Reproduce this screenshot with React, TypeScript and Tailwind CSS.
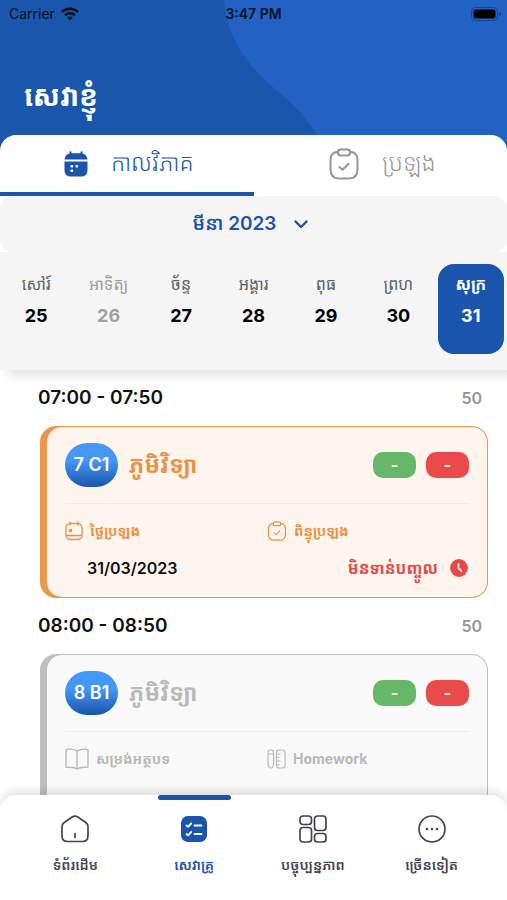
import React, { useState } from 'react';
import clsx from 'clsx';

const DAYS = [
  { name: 'សៅរ៍', date: 25 },
  { name: 'អាទិត្យ', date: 26, off: true },
  { name: 'ច័ន្ទ', date: 27 },
  { name: 'អង្គារ', date: 28 },
  { name: 'ពុធ', date: 29 },
  { name: 'ព្រហ', date: 30 },
  { name: 'សុក្រ', date: 31 },
];

/* ---------- icons ---------- */

function WifiIcon() {
  return (
    <svg width="18" height="14" viewBox="0 0 18 14" fill="none" stroke="#06101f" strokeWidth="2.4">
      <path d="M1 5a11.5 11.5 0 0 1 16 0" />
      <path d="M4 8.2a7.2 7.2 0 0 1 10 0" />
      <path d="M9 13.6 6.2 10.8a4 4 0 0 1 5.6 0z" fill="#06101f" stroke="none" />
    </svg>
  );
}

function BatteryIcon() {
  return (
    <svg width="31" height="14" viewBox="0 0 31 14">
      <rect x="0.5" y="0.5" width="26" height="13" rx="4" fill="none" stroke="#164690" />
      <rect x="2.5" y="2.5" width="22" height="9" rx="2.5" fill="#000" />
      <path d="M28 5v4c1.3-.4 2-1.1 2-2s-.7-1.6-2-2z" fill="#164690" />
    </svg>
  );
}

function CalendarSolidIcon() {
  return (
    <svg width="24" height="26" viewBox="0 0 24 26" fill="#1a54ac">
      <path d="M.5 8.5C.8 5 2.5 3 5.5 2.5V1.300a1 1 0 0 1 2 0v1h9v-1a1 1 0 0 1 2 0v1.200c3 .5 4.700 2.500 5 6z" />
      <path d="M.5 10.500h23V19c0 4-2 6.500-6.500 6.500H7C2.500 25.500.5 23 .5 19z" />
      <g fill="#fff">
        <rect x="6.5" y="14" width="2.600" height="2.600" rx=".8" />
        <rect x="11.5" y="14" width="2.600" height="2.600" rx=".8" />
        <rect x="6.5" y="18.5" width="2.600" height="2.600" rx=".8" />
      </g>
    </svg>
  );
}

function ClipboardIcon({ className, strokeWidth = 1.5 }: { className?: string; strokeWidth?: number }) {
  return (
    <svg
      className={className}
      viewBox="0 0 30 32"
      fill="none"
      stroke="currentColor"
      strokeWidth={strokeWidth}
      strokeLinecap="round"
      strokeLinejoin="round"
    >
      <rect x="9" y="1.5" width="12" height="6" rx="2.5" />
      <path d="M9 4C4 4 1.5 7 1.5 12v9c0 6.500 2.500 9.500 8.500 9.500h10c6 0 8.500-3 8.500-9.500v-9c0-5-2.500-8-7.500-8" />
      <path d="m10.500 19 3 2.800 6-6" />
    </svg>
  );
}

function ExamDateIcon() {
  return (
    <svg width="18" height="20" viewBox="0 0 18 20" fill="none" stroke="currentColor" strokeWidth="1.3" strokeLinecap="round">
      <rect x="1" y="2.5" width="16" height="16" rx="4.5" />
      <path d="M5 1v3M13 1v3M1.5 14.5h15" />
      <circle cx="5.5" cy="9.5" r="1.2" fill="currentColor" />
    </svg>
  );
}

function BookIcon() {
  return (
    <svg width="24" height="22" viewBox="0 0 24 22" fill="none" stroke="currentColor" strokeWidth="1.4" strokeLinejoin="round">
      <path d="M12 3C9.500 1.300 5 .9 2 1.300Q1 1.400 1 2.500V18.500Q1 19.500 2 19.400C6 19 9.500 19.400 12 21c2.500-1.600 6-2 10-1.600q1 .1 1-.9V2.500q0-1.100-1-1.200C19 .9 14.500 1.300 12 3zV21" />
    </svg>
  );
}

function HomeworkIcon() {
  return (
    <svg width="19" height="20" viewBox="0 0 19 20" fill="none" stroke="currentColor" strokeWidth="1.2" strokeLinejoin="round" strokeLinecap="round">
      <path d="M1 3.500C1 2 2 1 3.800 1s2.800 1 2.800 2.500V15c0 2-1.200 4-2.800 4S1 17 1 15zM1 5h5.600" />
      <rect x="9.5" y="1" width="8.5" height="18" rx="2.5" />
      <path d="M9.500 5h3.500M9.500 8.500h2.500M9.500 12h3.500M9.500 15.500h2.500" />
    </svg>
  );
}

function ClockIcon() {
  return (
    <svg width="18" height="18" viewBox="0 0 19 19">
      <circle cx="9.5" cy="9.5" r="9.4" fill="#e84a4a" />
      <path d="M9 5v4.500l3 3.300" fill="none" stroke="#fff" strokeWidth="1.7" strokeLinecap="round" strokeLinejoin="round" />
    </svg>
  );
}

function HomeIcon() {
  return (
    <svg width="28" height="28" viewBox="0 0 28 28" fill="none" stroke="currentColor" strokeWidth="1.7" strokeLinecap="round" strokeLinejoin="round">
      <path d="M11.500 1.800 3.200 7.500C1.700 8.600 1 9.800 1 11.500v9.300C1 24.500 3 26.500 6.500 26.500h15c3.500 0 5.500-2 5.500-5.700v-9.300c0-1.700-.7-2.900-2.200-4l-8.300-5.700c-1.700-1-3.300-1-5 0z" />
      <path d="M14 18.500v4" />
    </svg>
  );
}

function TasksIcon() {
  return (
    <svg width="26" height="26" viewBox="0 0 26 26" fill="none" stroke="#fff" strokeWidth="1.8" strokeLinecap="round" strokeLinejoin="round">
      <rect width="26" height="26" rx="7" fill="#1a54ac" stroke="none" />
      <path d="m5.500 9.500 1.500 1.300 3.200-3.300M13.500 9.500h7M5.500 18l1.500 1.300 3.200-3.300M13.500 18h7" />
    </svg>
  );
}

function GridIcon() {
  return (
    <svg width="28" height="28" viewBox="0 0 28 28" fill="none" stroke="currentColor" strokeWidth="1.7">
      <rect x="1" y="1" width="11.5" height="8.5" rx="3" />
      <rect x="15.5" y="1" width="11.5" height="14.5" rx="3" />
      <rect x="1" y="12.5" width="11.5" height="14.5" rx="3" />
      <rect x="15.5" y="18.5" width="11.5" height="8.5" rx="3" />
    </svg>
  );
}

function MoreIcon() {
  return (
    <svg width="28" height="28" viewBox="0 0 28 28" fill="none" stroke="currentColor" strokeWidth="1.7">
      <circle cx="14" cy="14" r="13" />
      <g fill="currentColor" stroke="none">
        <circle cx="9" cy="14" r="1.3" />
        <circle cx="14" cy="14" r="1.3" />
        <circle cx="19" cy="14" r="1.3" />
      </g>
    </svg>
  );
}

/* ---------- lesson card ---------- */

interface LessonProps {
  time: string;
  minutes: number;
  room: string;
  subject: string;
  muted?: boolean;
  children: React.ReactNode;
}

function Lesson({ time, minutes, room, subject, muted, children }: LessonProps) {
  return (
    <section>
      <div className="flex h-14 items-center justify-between pr-[25px] pl-[38px]">
        <h2 className="text-[19px] font-semibold text-[#111]">{time}</h2>
        <span className="text-base font-semibold text-[#949797]">{minutes}</span>
      </div>
      <div className={clsx('mr-[19px] ml-10 rounded-2xl py-px pr-px pl-[7px]', muted ? 'bg-[#bfbfbf]' : 'bg-[#eb9749]')}>
        <div className={clsx('h-[170px] rounded-[15px] px-[18px]', muted ? 'bg-[#f9f9f9] text-[#b9b9b9]' : 'bg-[#fef5ee] text-[#e99345]')}>
          <div className={clsx('flex h-[77px] items-center border-b', muted ? 'border-[#ededed]' : 'border-[#f5e9e1]')}>
            <span className="flex h-11 w-[53px] items-center justify-center rounded-[22px] bg-linear-to-b from-[#4597f5] from-40% to-[#1a54ac] text-lg font-semibold text-white">
              {room}
            </span>
            <h3 className="ml-[11px] flex-1 text-[23px] font-bold">{subject}</h3>
            <span className="flex h-[26px] w-[43px] items-center justify-center rounded-[10px] bg-[#66b768] text-base font-bold text-white">-</span>
            <span className="ml-[10px] flex h-[26px] w-[43px] items-center justify-center rounded-[10px] bg-[#ea4b4a] text-base font-bold text-white">-</span>
          </div>
          {children}
        </div>
      </div>
    </section>
  );
}

function Label({ icon, children }: { icon: React.ReactNode; children: React.ReactNode }) {
  return (
    <div className="flex w-1/2 items-center gap-[7px] text-sm font-bold">
      {icon}
      <span>{children}</span>
    </div>
  );
}

const TABS = [
  { id: 'schedule', label: 'កាលវិភាគ', icon: <CalendarSolidIcon /> },
  { id: 'exam', label: 'ប្រឡង', icon: <ClipboardIcon className="h-8 w-[30px]" strokeWidth={2} /> },
];

const NAV = [
  { id: 'home', label: 'ទំព័រដើម', icon: <HomeIcon /> },
  { id: 'teacher', label: 'សេវាគ្រូ', icon: <TasksIcon /> },
  { id: 'updates', label: 'បច្ចុប្បន្នភាព', icon: <GridIcon /> },
  { id: 'more', label: 'ច្រើនទៀត', icon: <MoreIcon /> },
];

export default function App() {
  const [tab, setTab] = useState('schedule');
  const [day, setDay] = useState(31);
  const [page, setPage] = useState('teacher');

  return (
    <div className="flex h-dvh flex-col overflow-hidden bg-white font-['Inter','Noto_Sans_Khmer','Noto_Sans',sans-serif]">
      <header className="relative -mb-4 h-[151px] shrink-0 bg-[#1a56ac]">
        <svg className="absolute inset-0 h-full w-full" viewBox="0 0 507 151" preserveAspectRatio="none">
          <path d="M224 0C228 45 252 70 284 97C300 110 310 124 322 142L328 151H507V0z" fill="#2262c4" />
        </svg>
        <div className="relative grid h-7 grid-cols-3 items-center px-[5px] text-sm text-[#06101f]">
          <span className="flex items-center gap-[6px] pl-1">
            Carrier <WifiIcon />
          </span>
          <span className="text-center font-semibold">3:47 PM</span>
          <span className="flex justify-end">
            <BatteryIcon />
          </span>
        </div>
        <h1 className="relative mt-12 pl-6 text-[28px] leading-10 font-bold text-white">សេវាខ្ញុំ</h1>
      </header>

      <div className="relative flex h-[61px] shrink-0 rounded-t-2xl bg-white" role="tablist">
        {TABS.map((t) => (
          <button
            key={t.id}
            role="tab"
            aria-selected={tab === t.id}
            onClick={() => setTab(t.id)}
            className={clsx(
              'flex flex-1 items-center justify-center gap-[23px] border-b-4 pl-1 text-[23px] font-light',
              tab === t.id ? 'border-[#1a54ac] text-[#1a54ac]' : 'border-transparent text-[#949797]'
            )}
          >
            {t.icon}
            <span>{t.label}</span>
          </button>
        ))}
      </div>

      <button className="flex h-14 shrink-0 items-center justify-center gap-[18px] rounded-xl bg-[#f5f5f5] pr-[6px] text-[19px] font-semibold text-[#1a54ac]">
        <span>មីនា 2023</span>
        <svg width="14" height="9" viewBox="0 0 14 9" fill="none" stroke="currentColor" strokeWidth="2.4" strokeLinecap="round" strokeLinejoin="round">
          <path d="m1.500 1.500 5.500 5.500 5.500-5.500" />
        </svg>
      </button>

      <div className="relative z-10 grid h-[118px] shrink-0 grid-cols-7 bg-[#f5f5f5] pt-3 shadow-[8px_6px_10px_rgba(0,0,0,0.1)]">
        {DAYS.map((d) => (
          <button
            key={d.date}
            onClick={() => setDay(d.date)}
            className={clsx(
              'mx-[3px] flex h-[90px] flex-col items-center rounded-2xl pt-1',
              day === d.date ? 'bg-[#1a54ac] font-bold text-white' : d.off ? 'text-[#a0a0a0]' : 'text-black'
            )}
          >
            <span className={clsx('text-base leading-8', day !== d.date && !d.off && 'text-[#5f6368]')}>{d.name}</span>
            <span className="text-lg leading-8 font-bold">{d.date}</span>
          </button>
        ))}
      </div>

      <main className="min-h-0 flex-1 overflow-y-auto [scrollbar-width:none]">
        <Lesson time="07:00 - 07:50" minutes={50} room="7 C1" subject="ភូមិវិទ្យា">
          <div className="flex h-[54px] items-center">
            <Label icon={<ExamDateIcon />}>ថ្ងៃប្រឡង</Label>
            <Label icon={<ClipboardIcon className="h-5 w-5" strokeWidth={2} />}>ពិន្ទុប្រឡង</Label>
          </div>
          <div className="flex items-center justify-between pr-px pl-[22px] text-base leading-5">
            <span className="font-semibold text-[#111]">31/03/2023</span>
            <span className="flex items-center gap-3 font-bold text-[#e84a4a]">
              មិនទាន់បញ្ចូល <ClockIcon />
            </span>
          </div>
        </Lesson>
        <Lesson time="08:00 - 08:50" minutes={50} room="8 B1" subject="ភូមិវិទ្យា" muted>
          <div className="flex h-[54px] items-center">
            <Label icon={<BookIcon />}>សម្រង់អត្ថបទ</Label>
            <Label icon={<HomeworkIcon />}>Homework</Label>
          </div>
        </Lesson>
      </main>

      <nav className="relative z-10 grid h-[105px] shrink-0 grid-cols-4 rounded-t-2xl bg-white px-4 shadow-[0_-4px_10px_rgba(0,0,0,0.12)]">
        {NAV.map((item) => (
          <button
            key={item.id}
            onClick={() => setPage(item.id)}
            className={clsx('flex flex-col items-center text-sm font-semibold', page === item.id ? 'text-[#1a54ac]' : 'text-[#44464f]')}
          >
            <span className={clsx('h-[5px] w-[73px] rounded-full', page === item.id && 'bg-[#1a54ac]')} />
            <span className="mt-[15px] flex h-7 items-center">{item.icon}</span>
            <span className="mt-2 leading-7">{item.label}</span>
          </button>
        ))}
      </nav>
    </div>
  );
}
